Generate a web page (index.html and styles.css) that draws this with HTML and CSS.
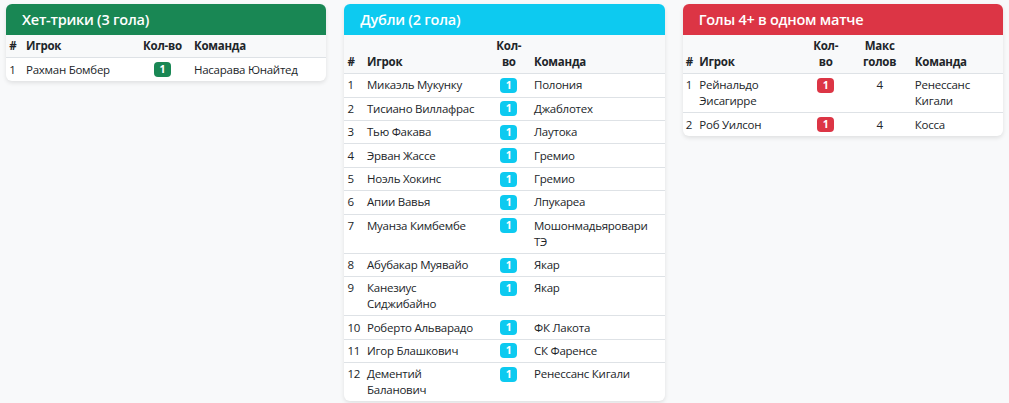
FILE: index.html
```html
<!DOCTYPE html>
<html lang="ru">
<head>
<meta charset="utf-8">
<title>Рекорды матчей</title>
<link rel="stylesheet" href="styles.css">
</head>
<body>
<main class="board">
  <section class="card card-success">
    <h2 class="card-title">Хет-трики (3 гола)</h2>
    <table class="stats">
      <colgroup>
        <col class="w-hat-num"><col class="w-hat-player"><col class="w-hat-count"><col>
      </colgroup>
      <thead>
        <tr><th>#</th><th>Игрок</th><th class="center">Кол-во</th><th>Команда</th></tr>
      </thead>
      <tbody>
        <tr><td>1</td><td>Рахман Бомбер</td><td class="center"><span class="badge">1</span></td><td>Насарава Юнайтед</td></tr>
      </tbody>
    </table>
  </section>

  <section class="card card-info">
    <h2 class="card-title">Дубли (2 гола)</h2>
    <table class="stats">
      <colgroup>
        <col class="w-dbl-num"><col class="w-dbl-player"><col class="w-dbl-count"><col>
      </colgroup>
      <thead>
        <tr><th>#</th><th>Игрок</th><th class="center">Кол-во</th><th>Команда</th></tr>
      </thead>
      <tbody>
        <tr><td>1</td><td>Микаэль Мукунку</td><td class="center"><span class="badge">1</span></td><td>Полония</td></tr>
        <tr><td>2</td><td>Тисиано Виллафрас</td><td class="center"><span class="badge">1</span></td><td>Джаблотех</td></tr>
        <tr><td>3</td><td>Тью Факава</td><td class="center"><span class="badge">1</span></td><td>Лаутока</td></tr>
        <tr><td>4</td><td>Эрван Жассе</td><td class="center"><span class="badge">1</span></td><td>Гремио</td></tr>
        <tr><td>5</td><td>Ноэль Хокинс</td><td class="center"><span class="badge">1</span></td><td>Гремио</td></tr>
        <tr><td>6</td><td>Апии Вавья</td><td class="center"><span class="badge">1</span></td><td>Лпукареа</td></tr>
        <tr><td>7</td><td>Муанза Кимбембе</td><td class="center"><span class="badge">1</span></td><td>Мошонмадьяровари ТЭ</td></tr>
        <tr><td>8</td><td>Абубакар Муявайо</td><td class="center"><span class="badge">1</span></td><td>Якар</td></tr>
        <tr><td>9</td><td>Канезиус Сиджибайно</td><td class="center"><span class="badge">1</span></td><td>Якар</td></tr>
        <tr><td>10</td><td>Роберто Альварадо</td><td class="center"><span class="badge">1</span></td><td>ФК Лакота</td></tr>
        <tr><td>11</td><td>Игор Блашкович</td><td class="center"><span class="badge">1</span></td><td>СК Фаренсе</td></tr>
        <tr><td>12</td><td>Дементий Баланович</td><td class="center"><span class="badge">1</span></td><td>Ренессанс Кигали</td></tr>
      </tbody>
    </table>
  </section>

  <section class="card card-danger">
    <h2 class="card-title">Голы 4+ в одном матче</h2>
    <table class="stats">
      <colgroup>
        <col class="w-big-num"><col class="w-big-player"><col class="w-big-count"><col class="w-big-max"><col>
      </colgroup>
      <thead>
        <tr><th>#</th><th>Игрок</th><th class="center">Кол-во</th><th class="center">Макс голов</th><th>Команда</th></tr>
      </thead>
      <tbody>
        <tr><td>1</td><td>Рейнальдо Эисагирре</td><td class="center"><span class="badge">1</span></td><td class="center">4</td><td>Ренессанс Кигали</td></tr>
        <tr><td>2</td><td>Роб Уилсон</td><td class="center"><span class="badge">1</span></td><td class="center">4</td><td>Косса</td></tr>
      </tbody>
    </table>
  </section>
</main>
</body>
</html>
```
FILE: styles.css
```css
* { box-sizing: border-box; }

html, body {
  margin: 0;
  background: #f8f9fa;
  color: #212529;
  font-family: "Open Sans", "Noto Sans", "Liberation Sans", sans-serif;
}

.board {
  display: grid;
  grid-template-columns: repeat(3, 1fr);
  gap: 18px;
  padding: 4px 6px;
  align-items: start;
}

.card {
  background: #fff;
  border-radius: 6px;
  overflow: hidden;
  box-shadow: 0 2px 4px rgba(0, 0, 0, 0.1);
}

.card-title {
  margin: 0;
  padding: 6px 16px;
  font-size: 14.5px;
  line-height: 19px;
  letter-spacing: -0.25px;
  font-weight: 600;
  color: #fff;
}

.card-success .card-title { background: #198754; }
.card-info .card-title { background: #0dcaf0; }
.card-danger .card-title { background: #dc3545; }

.stats {
  width: 100%;
  table-layout: fixed;
  border-collapse: collapse;
  font-size: 11.5px;
  line-height: 15.8px;
  letter-spacing: -0.25px;
}

.stats th,
.stats td {
  padding: 3.3px 3.2px;
  text-align: left;
  vertical-align: top;
  border-bottom: 1px solid #dee2e6;
}

.stats td:nth-child(2),
.stats td:last-child {
  padding-right: 9px;
}

.stats thead th {
  background: #f8f9fa;
  font-weight: 700;
  vertical-align: bottom;
}

.stats tbody tr:last-child td { border-bottom: 0; }

.stats .center { text-align: center; }

.badge {
  display: inline-block;
  min-width: 17px;
  padding: 0 5px;
  border-radius: 4px;
  font-size: 10.5px;
  line-height: 15px;
  letter-spacing: 0;
  font-weight: 700;
  color: #fff;
  text-align: center;
  vertical-align: top;
  margin-top: 0.5px;
}

.card-success .badge { background: #198754; }
.card-info .badge { background: #0dcaf0; }
.card-danger .badge { background: #dc3545; }

.w-hat-num { width: 16.8px; }
.w-hat-player { width: 111.4px; }
.w-hat-count { width: 56.6px; }

.w-dbl-num { width: 19.5px; }
.w-dbl-player { width: 123px; }
.w-dbl-count { width: 44px; }

.w-big-num { width: 13.5px; }
.w-big-player { width: 107.5px; }
.w-big-count { width: 44px; }
.w-big-max { width: 64px; }
```
